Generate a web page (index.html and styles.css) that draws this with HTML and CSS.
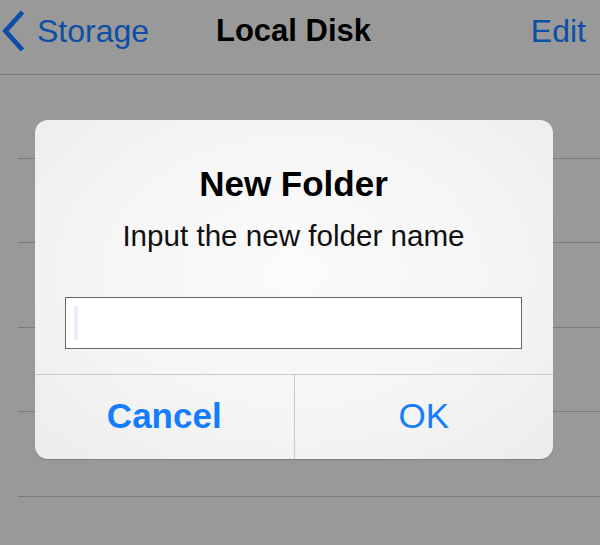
FILE: index.html
```html
<!DOCTYPE html>
<html>
<head>
<meta charset="utf-8">
<link rel="stylesheet" href="styles.css">
</head>
<body>
<div class="screen">
  <header class="nav">
    <div class="nav-back">
      <svg class="chevron" width="37" height="44" viewBox="0 0 37 44"><polyline points="22.5,2 5.5,21 22.5,40" fill="none" stroke="#0d4fa6" stroke-width="4.8"/></svg>
      <span class="nav-link">Storage</span>
    </div>
    <div class="nav-title">Local Disk</div>
    <div class="nav-edit"><span class="nav-link">Edit</span></div>
  </header>
  <div class="list">
    <div class="row"></div>
    <div class="row"></div>
    <div class="row"></div>
    <div class="row"></div>
    <div class="row"></div>
  </div>
  <div class="alert">
    <div class="alert-body">
      <div class="alert-title">New Folder</div>
      <div class="alert-message">Input the new folder name</div>
      <div class="alert-input"><span class="caret"></span></div>
    </div>
    <div class="alert-buttons">
      <div class="alert-btn bold">Cancel</div>
      <div class="alert-btn">OK</div>
    </div>
  </div>
</div>
</body>
</html>
```
FILE: styles.css
```css
* { box-sizing: border-box; }
html, body {
  margin: 0;
  padding: 0;
  background: #999999;
  font-family: "Liberation Sans", Arial, sans-serif;
}
.screen {
  position: relative;
  width: 600px;
  height: 545px;
  overflow: hidden;
  background: #999999;
}
.nav {
  height: 75px;
  padding-top: 11px;
  border-bottom: 1px solid #787878;
  display: grid;
  grid-template-columns: 1fr auto 1fr;
  align-items: start;
}
.nav-back {
  display: flex;
  align-items: flex-start;
}
.chevron { display: block; margin-top: -1px; }
.nav-link {
  font-size: 32px;
  line-height: 40px;
  color: #0d4fa6;
}
.nav-title {
  font-size: 31px;
  line-height: 40px;
  font-weight: bold;
  color: #000;
  margin-right: 13px;
}
.nav-edit {
  display: flex;
  justify-content: flex-end;
  padding-right: 14px;
}
.list {
  margin-left: 18px;
  margin-top: -0.6px;
}
.row {
  height: 84.5px;
  border-bottom: 1px solid #7b7b7b;
}
.alert {
  position: absolute;
  left: 35px;
  top: 120px;
  width: 518px;
  height: 339px;
  border-radius: 13px;
  overflow: hidden;
  background: radial-gradient(ellipse at 50% 45%, #fbfbfb 0%, #f5f5f5 55%, #ececec 100%);
  box-shadow: 0 1px 1px rgba(0,0,0,0.18);
  display: flex;
  flex-direction: column;
}
.alert-body {
  padding: 44px 31px 25px 30px;
  display: flex;
  flex-direction: column;
  align-items: stretch;
}
.alert-title {
  font-size: 35px;
  line-height: 40px;
  font-weight: bold;
  color: #000;
  text-align: center;
}
.alert-message {
  margin-top: 15px;
  font-size: 29.6px;
  line-height: 34px;
  color: #111;
  text-align: center;
}
.alert-input {
  margin-top: 44px;
  height: 52px;
  background: #fff;
  border: 1px solid #666;
  padding: 8px 0 0 8px;
}
.caret {
  display: block;
  width: 4px;
  height: 34px;
  background: #e6edf8;
}
.alert-buttons {
  flex: 1;
  display: flex;
  border-top: 1px solid #c9c8cd;
}
.alert-btn {
  flex: 1;
  display: flex;
  align-items: center;
  justify-content: center;
  font-size: 35px;
  color: #147dfb;
  padding-bottom: 2px;
}
.alert-btn + .alert-btn {
  border-left: 1px solid #c9c8cd;
}
.alert-btn.bold { font-weight: bold; }
```
